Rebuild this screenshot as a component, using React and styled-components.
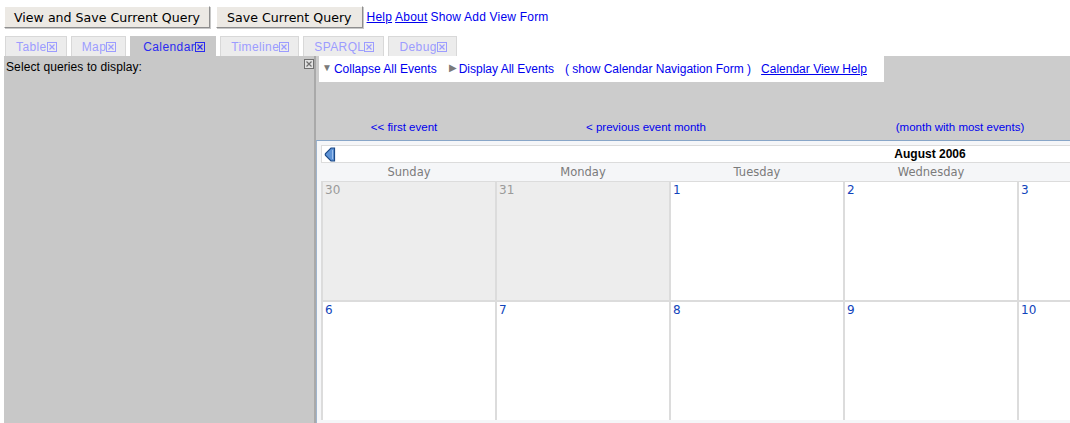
import React from 'react';
import styled, { createGlobalStyle } from 'styled-components';

const GlobalStyle = createGlobalStyle`
  html, body {
    margin: 0;
    padding: 0;
    background: #ffffff;
    font-family: "Liberation Sans", Arial, sans-serif;
    overflow: hidden;
  }
`;

const Page = styled.div`
  width: 1070px;
  height: 423px;
  padding: 6px 0 0 4px;
  box-sizing: border-box;
  display: flex;
  flex-direction: column;
  overflow: hidden;
`;

const Toolbar = styled.div`
  display: flex;
  align-items: center;
  gap: 6px;
  height: 22px;
`;

const Button = styled.button`
  height: 22px;
  padding: 0 ${p => p.$pad || 8}px;
  background: #ece9e4;
  border: 1px solid;
  border-color: #ffffff #8e8e8e #8e8e8e #ffffff;
  box-shadow: 1px 1px 0 #c8c8c8;
  font-family: "DejaVu Sans", sans-serif;
  font-size: 12.6px;
  color: #000;
  cursor: pointer;
`;

const TopLinks = styled.div`
  display: flex;
  gap: 3px;
  margin-left: -2px;
  font-size: 12px;
  letter-spacing: 0.2px;
`;

const TopLink = styled.a`
  color: #0000ee;
  text-decoration: ${p => (p.$plain ? 'none' : 'underline')};
  cursor: pointer;
`;

const TabBar = styled.div`
  display: flex;
  gap: 4px;
  margin-top: 8px;
  padding-left: 1px;
  height: 20px;
`;

const Tab = styled.div`
  display: flex;
  align-items: center;
  height: 20px;
  box-sizing: border-box;
  padding: 0 ${p => (p.$active ? 10 : 9)}px 0 ${p => (p.$active ? 12 : 10)}px;
  background: ${p => (p.$active ? '#c8c8c8' : '#ececec')};
  border: 1px solid ${p => (p.$active ? '#c8c8c8' : '#d8d8d8')};
  border-bottom: none;
  color: ${p => (p.$active ? '#2b2bf0' : '#9c9cff')};
  font-size: 12px;
  letter-spacing: 0.4px;
`;

const Main = styled.div`
  flex: 1;
  display: flex;
  min-height: 0;
`;

const LeftPanel = styled.div`
  width: 312px;
  flex: none;
  background: #c8c8c8;
  border-right: 2px solid #a9a9a9;
  padding: 3px 0 0 2px;
  box-sizing: border-box;
  display: flex;
  justify-content: space-between;
  align-items: flex-start;
  font-size: 12px;
  color: #000;
`;

const PanelTitle = styled.span`
  margin-top: 1px;
  letter-spacing: 0.1px;
`;

const RightPanel = styled.div`
  flex: 1;
  min-width: 0;
  background: #cccccc;
  overflow: hidden;
  display: flex;
  flex-direction: column;
`;

const ActionBox = styled.div`
  align-self: flex-start;
  margin-left: 3px;
  height: 26px;
  width: 565px;
  box-sizing: border-box;
  background: #ffffff;
  display: flex;
  align-items: center;
  padding: 0 0 0 3px;
  font-size: 12px;
  white-space: nowrap;
`;

const Action = styled.a`
  display: flex;
  align-items: center;
  color: #0000ee;
  margin-right: ${p => p.$gap || 0}px;
  text-decoration: ${p => (p.$underline ? 'underline' : 'none')};
`;

const Arrow = styled.span`
  color: #7a7a7a;
  font-size: 10px;
  margin-right: 2px;
  margin-top: -3px;
`;

const NavRow = styled.div`
  display: grid;
  grid-template-columns: 176px 308px 320px;
  margin-top: 35px;
  height: 20px;
  align-items: center;
  font-size: 11.5px;
`;

const NavLink = styled.a`
  text-align: center;
  color: #0000ee;
  cursor: pointer;
`;

const Calendar = styled.div`
  margin-top: 3px;
  width: 1240px;
  flex: 1;
  border-top: 1px solid #88a6c8;
  border-left: 1px solid #9fb4cc;
  background: #f5f6f8;
  padding: 4px 0 0 5px;
  box-sizing: border-box;
`;

const MonthHeader = styled.div`
  width: 1218px;
  height: 18px;
  margin-left: -1px;
  box-sizing: border-box;
  background: #ffffff;
  border: 1px solid #dcdcdc;
  position: relative;
  display: flex;
  align-items: center;
  justify-content: center;
  font-weight: bold;
  font-size: 12px;
  color: #000;
`;

const PrevButton = styled.svg`
  position: absolute;
  left: 2px;
  top: 1px;
`;

const DayNames = styled.div`
  display: grid;
  grid-template-columns: repeat(7, 174px);
  height: 18px;
  align-items: center;
  font-family: "DejaVu Sans", sans-serif;
  font-size: 11.5px;
  color: #7b7b7b;
`;

const DayName = styled.div`
  text-align: center;
`;

const Grid = styled.div`
  display: grid;
  grid-template-columns: repeat(7, 172px);
  grid-auto-rows: 118px;
  gap: 2px;
  padding: 1px 0 0 2px;
  margin-left: -1px;
  background: #dcdcdc;
  width: 1220px;
`;

const Cell = styled.div`
  background: ${p => (p.$other ? '#ededed' : '#ffffff')};
  color: ${p => (p.$other ? '#9a9a9a' : '#1144bb')};
  font-family: "DejaVu Sans", sans-serif;
  font-size: 12px;
  padding: 1px 0 0 2px;
`;

const CloseBox = ({ color = '#777' }) => (
  <svg width="10" height="10" viewBox="0 0 10 10" style={{ flex: 'none' }}>
    <rect x="0.5" y="0.5" width="9" height="9" fill="none" stroke={color} />
    <path d="M2.5 2.5 L7.5 7.5 M7.5 2.5 L2.5 7.5" stroke={color} strokeWidth="1.2" />
  </svg>
);

const PanelClose = styled.div`
  width: 10px;
  height: 10px;
  background: #e2e2e2;
  display: flex;
`;

const tabs = ['Table', 'Map', 'Calendar', 'Timeline', 'SPARQL', 'Debug'];
const days = ['Sunday', 'Monday', 'Tuesday', 'Wednesday', 'Thursday', 'Friday', 'Saturday'];
const weeks = [
  [[30, true], [31, true], [1], [2], [3], [4], [5]],
  [[6], [7], [8], [9], [10], [11], [12]],
];

export default function App() {
  return (
    <>
      <GlobalStyle />
      <Page>
        <Toolbar>
          <Button $pad={9}>View and Save Current Query</Button>
          <Button $pad={10}>Save Current Query</Button>
          <TopLinks>
            <TopLink>Help</TopLink>
            <TopLink>About</TopLink>
            <TopLink $plain>Show Add View Form</TopLink>
          </TopLinks>
        </Toolbar>
        <TabBar>
          {tabs.map(t => (
            <Tab key={t} $active={t === 'Calendar'}>
              {t}
              <CloseBox color={t === 'Calendar' ? '#2b2bf0' : '#9c9cff'} />
            </Tab>
          ))}
        </TabBar>
        <Main>
          <LeftPanel>
            <PanelTitle>Select queries to display:</PanelTitle>
            <PanelClose>
              <CloseBox color="#6f6f6f" />
            </PanelClose>
          </LeftPanel>
          <RightPanel>
            <ActionBox>
              <Action $gap={12}><Arrow>▼</Arrow>Collapse All Events</Action>
              <Action $gap={11}><Arrow>▶</Arrow>Display All Events</Action>
              <Action $gap={10}>( show Calendar Navigation Form )</Action>
              <Action $underline>Calendar View Help</Action>
            </ActionBox>
            <NavRow>
              <NavLink>&lt;&lt; first event</NavLink>
              <NavLink>&lt; previous event month</NavLink>
              <NavLink>(month with most events)</NavLink>
            </NavRow>
            <Calendar>
              <MonthHeader>
                <PrevButton width="12" height="15" viewBox="0 0 12 15">
                  <path d="M10.5 1 L10.5 14 L7 14 L1.5 8.5 Q1 7.5 1.5 6.5 L7 1 Z" fill="#5e93d6" stroke="#1d4a88" strokeWidth="1.2" />
                  <path d="M8.5 3 L8.5 12" stroke="#9cc0ee" strokeWidth="1" />
                </PrevButton>
                August 2006
              </MonthHeader>
              <DayNames>
                {days.map(d => <DayName key={d}>{d}</DayName>)}
              </DayNames>
              <Grid>
                {weeks.flat().map(([n, other], i) => (
                  <Cell key={i} $other={other}>{n}</Cell>
                ))}
              </Grid>
            </Calendar>
          </RightPanel>
        </Main>
      </Page>
    </>
  );
}
